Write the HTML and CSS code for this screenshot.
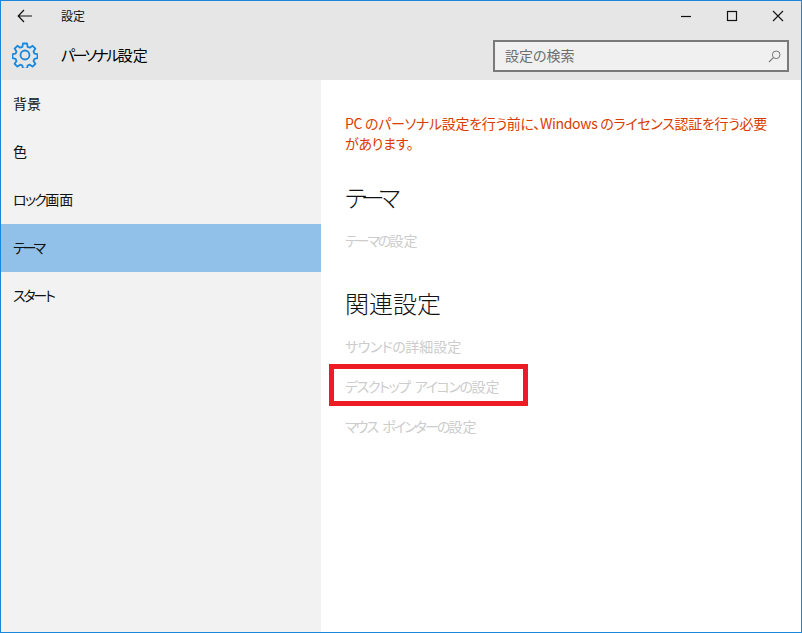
FILE: index.html
```html
<!DOCTYPE html>
<html lang="ja">
<head>
<meta charset="utf-8">
<title>設定</title>
<link rel="stylesheet" href="styles.css">
</head>
<body>
<div class="window">
  <header class="header">
    <div class="titlebar">
      <svg class="back" width="16" height="14" viewBox="0 0 16 14"><path d="M7 1 1.2 7 7 13M1.2 7H15" fill="none" stroke="#111" stroke-width="1.2"/></svg>
      <span class="title">設定</span>
      <div class="controls">
        <svg width="12" height="12" viewBox="0 0 12 12"><path d="M1 6.5H11" stroke="#111" stroke-width="1.2"/></svg>
        <svg width="12" height="12" viewBox="0 0 12 12"><rect x="1.5" y="1.5" width="9" height="9" fill="none" stroke="#111" stroke-width="1.2"/></svg>
        <svg width="12" height="12" viewBox="0 0 12 12"><path d="M1 1 11 11M11 1 1 11" stroke="#111" stroke-width="1.1"/></svg>
      </div>
    </div>
    <div class="pagebar">
      <svg class="gear" width="26" height="26" viewBox="0 0 26 26"><path d="M11 1.5h4l.6 3.3 2.2.9 2.8-1.9 2.8 2.8-1.9 2.8.9 2.2 3.1.6v4l-3.1.6-.9 2.2 1.9 2.8-2.8 2.8-2.8-1.9-2.2.9-.6 3.1h-4l-.6-3.1-2.2-.9-2.8 1.9-2.8-2.8 1.9-2.8-.9-2.2-3.1-.6v-4l3.1-.6.9-2.2-1.9-2.8 2.8-2.8 2.8 1.9 2.2-.9z" fill="none" stroke="#1a86dc" stroke-width="1.8" stroke-linejoin="round"/><circle cx="13" cy="13" r="4.5" fill="none" stroke="#1a86dc" stroke-width="1.8"/></svg>
      <span class="pagetitle"><span class="k26">パーソナル</span>設定</span>
      <div class="search">
        <span class="placeholder">設定の検索</span>
        <svg width="13" height="13" viewBox="0 0 13 13"><circle cx="8.2" cy="4.8" r="3.8" fill="none" stroke="#777" stroke-width="1"/><path d="M5.4 7.6 1 12" stroke="#777" stroke-width="1.1"/></svg>
      </div>
    </div>
  </header>
  <div class="body">
    <nav class="sidebar">
      <div class="item">背景</div>
      <div class="item">色</div>
      <div class="item"><span class="k17">ロック</span>画面</div>
      <div class="item selected"><span class="k30">テーマ</span></div>
      <div class="item"><span class="k22">スタート</span></div>
    </nav>
    <main class="content">
      <p class="warning">PC のパーソナル設定を行う前に、Windows のライセンス認証を行う必要があります。</p>
      <h2 class="heading heading-theme"><span class="k58">テーマ</span></h2>
      <div class="link"><span class="k20">テーマの</span>設定</div>
      <h2 class="heading heading-related">関連設定</h2>
      <div class="link"><span class="k05">サウンドの</span>詳細設定</div>
      <div class="link marked"><span class="k14">デスクトップ</span> <span class="k14">アイコンの</span>設定<span class="mark"></span></div>
      <div class="link"><span class="k19">マウス</span> <span class="k19">ポインターの</span>設定</div>
    </main>
  </div>
</div>
</body>
</html>
```
FILE: styles.css
```css
* { box-sizing: border-box; }
html, body { margin: 0; height: 100%; }
body {
  font-family: "Noto Sans CJK JP", "Noto Sans", sans-serif;
  font-feature-settings: "palt";
  background: #fff;
  color: #111;
}
.window {
  width: 802px;
  height: 633px;
  border: 1px solid #1a86dc;
  display: flex;
  flex-direction: column;
}
.header { height: 79px; background: #e6e6e6; flex: none; }
.titlebar {
  height: 29px;
  display: flex;
  align-items: center;
  padding-left: 16px;
}
.back { margin-right: 28px; }
.title { font-size: 12px; }
.controls {
  margin-left: auto;
  display: flex;
  gap: 34px;
  padding-right: 17px;
  padding-top: 1px;
}
.pagebar {
  height: 50px;
  display: flex;
  align-items: center;
  padding-left: 11px;
  padding-right: 12px;
}
.gear { margin-right: 23px; }
.pagetitle { font-size: 15px; font-weight: 400; color: #000; padding-bottom: 2px; }
.search {
  margin-left: auto;
  margin-top: 2px;
  width: 296px;
  height: 32px;
  border: 2px solid #7a7a7a;
  background: #f0f0f0;
  display: flex;
  align-items: center;
  justify-content: space-between;
  padding: 0 6px 0 10px;
}
.placeholder { font-size: 14px; color: #6e6e6e; padding-bottom: 2px; }
.body { flex: 1; display: flex; min-height: 0; }
.sidebar { width: 320px; background: #f2f2f2; flex: none; }
.item {
  height: 48px;
  display: flex;
  align-items: center;
  padding: 0 0 2px 12px;
  font-size: 14px;
}
.selected { background: #91c0e8; }
.content { flex: 1; padding: 33px 30px 0 24px; }
.warning {
  margin: 0;
  font-size: 14px;
  line-height: 20px;
  letter-spacing: -0.3px;
  color: #da3b01;
}
.heading { margin: 0; font-size: 24px; font-weight: 300; line-height: 32px; }
.heading-theme { margin-top: 28px; }
.heading-related { margin-top: 37px; }
.link {
  font-size: 14px;
  line-height: 20px;
  word-spacing: 2px;
  color: #ccc;
  margin-top: 20px;
}
.heading + .link { margin-top: 17px; }
.marked { position: relative; }
.mark {
  position: absolute;
  left: -16px;
  top: -12px;
  width: 199px;
  height: 42px;
  border: 5px solid #ed1c24;
}
.k05 { letter-spacing: -0.5px; }
.k14 { letter-spacing: -1.4px; }
.k17 { letter-spacing: -1.7px; }
.k19 { letter-spacing: -1.9px; }
.k20 { letter-spacing: -2px; }
.k22 { letter-spacing: -2.2px; }
.k26 { letter-spacing: -2.6px; }
.k30 { letter-spacing: -3px; }
.k58 { letter-spacing: -5.8px; }
```
